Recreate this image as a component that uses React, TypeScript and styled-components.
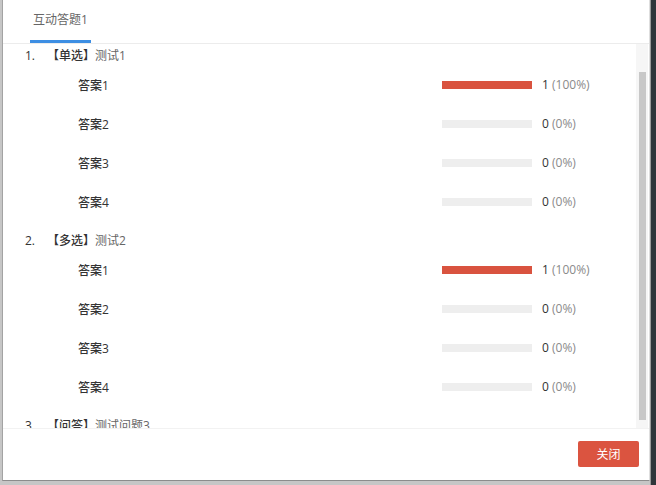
import React from 'react';
import styled, { createGlobalStyle } from 'styled-components';

const GlobalStyle = createGlobalStyle`
  html, body {
    margin: 0;
    padding: 0;
    background: #cfcfcf;
  }
  body {
    font-family: "Open Sans", "Noto Sans CJK SC", sans-serif;
  }
`;

const Screen = styled.div`
  width: 656px;
  height: 485px;
  display: flex;
  align-items: flex-start;
  background: #c6c6c6;
  padding-left: 2px;
  box-sizing: border-box;
  overflow: hidden;
`;

const DarkEdge = styled.div`
  width: 6px;
  height: 485px;
  background: #2f363b;
  border-left: 1px solid #9a9a9a;
  box-sizing: border-box;
`;

const Modal = styled.div`
  width: 648px;
  height: 481px;
  background: #fff;
  border-left: 1px solid #a3a3a3;
  border-bottom: 1px solid #8c8c8c;
  border-right: 1px solid #dedede;
  box-sizing: border-box;
  display: flex;
  flex-direction: column;
`;

const TabBar = styled.div`
  height: 43px;
  border-bottom: 1px solid #ececec;
  display: flex;
  align-items: flex-end;
  padding-left: 27px;
  flex-shrink: 0;
`;

const Tab = styled.div<{ active?: boolean }>`
  height: 41px;
  padding: 0 3px;
  box-sizing: border-box;
  display: flex;
  align-items: center;
  font-size: 12px;
  color: #666;
  padding-bottom: 4px;
  border-bottom: 3px solid ${({ active }) => (active ? '#3d8ee3' : 'transparent')};
`;

const Body = styled.div`
  height: 384px;
  display: flex;
  flex-shrink: 0;
  overflow: hidden;
`;

const List = styled.div`
  flex: 1;
  padding-top: 1px;
`;

const Track = styled.div`
  width: 12px;
  background: #f6f6f6;
  display: flex;
  flex-direction: column;
  align-items: center;
  margin-right: 1px;
`;

const Thumb = styled.div`
  width: 7px;
  margin-top: 28px;
  height: 348px;
  background: #c8c8c8;
`;

const Question = styled.div`
  & + & {
    margin-top: 9px;
  }
`;

const QTitle = styled.div`
  height: 20px;
  display: flex;
  align-items: center;
  padding-left: 22px;
  font-size: 12px;
  color: #333;
`;

const QNum = styled.span`
  width: 22px;
`;

const QType = styled.span`
  color: #333;
  font-weight: 500;
`;

const QText = styled.span`
  color: #666;
`;

const AnswerRow = styled.div`
  height: 39px;
  display: flex;
  align-items: center;
  padding-left: 75px;
  font-size: 12px;
`;

const AnswerLabel = styled.span`
  flex: 1;
  color: #333;
  font-weight: 500;
`;

const Bar = styled.div`
  width: 90px;
  height: 8px;
  background: #eeeeee;
  margin-right: 10px;
`;

const Fill = styled.div`
  height: 100%;
  background: #d9533f;
`;

const Count = styled.span`
  width: 94px;
  color: #333;
`;

const Percent = styled.span`
  color: #8a8a8a;
`;

const Footer = styled.div`
  flex: 1;
  border-top: 1px solid #f2f2f2;
  display: flex;
  justify-content: flex-end;
  align-items: flex-start;
  padding: 12px 10px 0 0;
`;

const CloseButton = styled.button`
  width: 61px;
  height: 26px;
  border: none;
  border-radius: 2px;
  background: #db5440;
  color: #fff;
  font-size: 12px;
  font-family: inherit;
  padding: 0;
  cursor: pointer;
`;

const questions = [
  { num: '1.', type: '【单选】', title: '测试1', answers: [1, 0, 0, 0] },
  { num: '2.', type: '【多选】', title: '测试2', answers: [1, 0, 0, 0] },
  { num: '3.', type: '【问答】', title: '测试问题3', answers: [] as number[] },
];

const total = 1;

export default function App() {
  return (
    <>
      <GlobalStyle />
      <Screen>
        <Modal>
          <TabBar>
            <Tab active>互动答题1</Tab>
          </TabBar>
          <Body>
            <List>
              {questions.map((q) => (
                <Question key={q.num}>
                  <QTitle>
                    <QNum>{q.num}</QNum>
                    <QType>{q.type}</QType>
                    <QText>{q.title}</QText>
                  </QTitle>
                  {q.answers.map((n, i) => {
                    const pct = Math.round((n / total) * 100);
                    return (
                      <AnswerRow key={i}>
                        <AnswerLabel>答案{i + 1}</AnswerLabel>
                        <Bar>
                          <Fill style={{ width: `${pct}%` }} />
                        </Bar>
                        <Count>
                          {n} <Percent>({pct}%)</Percent>
                        </Count>
                      </AnswerRow>
                    );
                  })}
                </Question>
              ))}
            </List>
            <Track>
              <Thumb />
            </Track>
          </Body>
          <Footer>
            <CloseButton>关闭</CloseButton>
          </Footer>
        </Modal>
        <DarkEdge />
      </Screen>
    </>
  );
}
